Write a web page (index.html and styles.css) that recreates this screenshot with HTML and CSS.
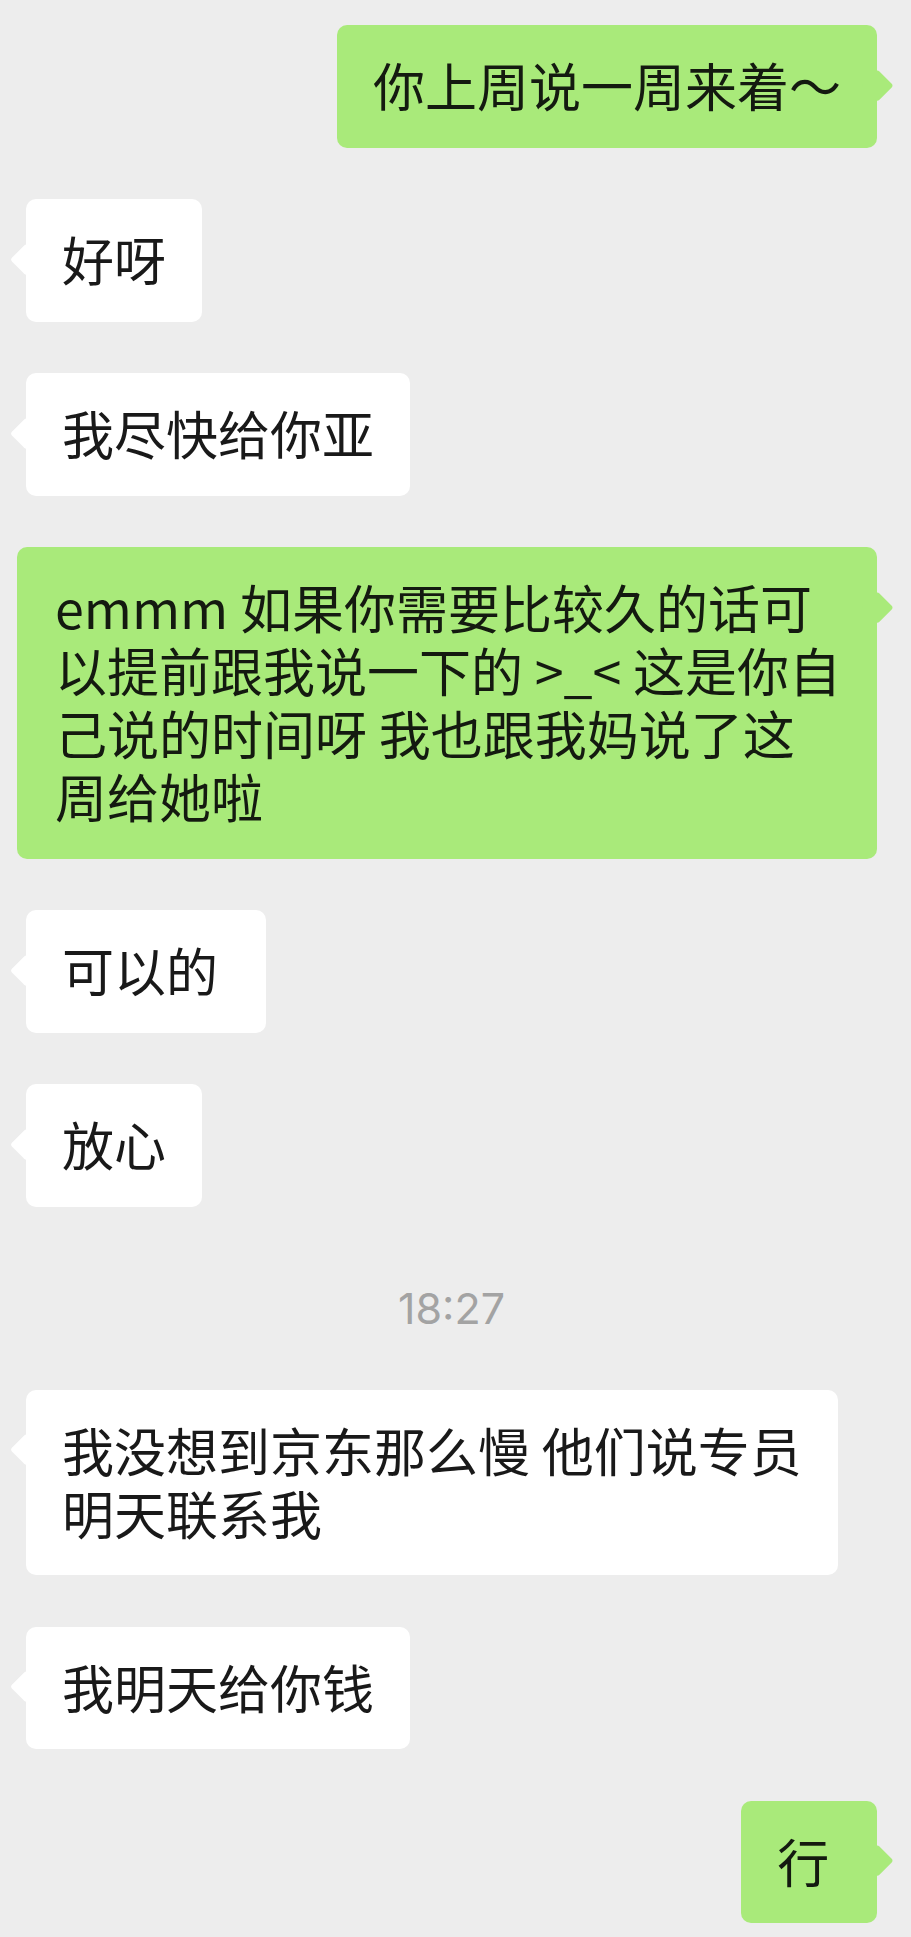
FILE: index.html
```html
<!DOCTYPE html>
<html lang="zh-CN">
<head>
<meta charset="utf-8">
<title>Chat</title>
<link rel="stylesheet" href="styles.css">
</head>
<body>
<main class="chat">
  <div class="row out"><div class="bubble green">你上周说一周来着～</div></div>
  <div class="row in"><div class="bubble white">好呀</div></div>
  <div class="row in"><div class="bubble white">我尽快给你亚</div></div>
  <div class="row out"><div class="bubble green wide-out">emmm 如果你需要比较久的话可<br>以提前跟我说一下的 &gt;_&lt; 这是你自<br>己说的时间呀 我也跟我妈说了这<br>周给她啦</div></div>
  <div class="row in"><div class="bubble white">可以的&nbsp;</div></div>
  <div class="row in"><div class="bubble white">放心</div></div>
  <div class="time">18:27</div>
  <div class="row in"><div class="bubble white wide-in">我没想到京东那么慢 他们说专员<br>明天联系我</div></div>
  <div class="row in"><div class="bubble white">我明天给你钱</div></div>
  <div class="row out"><div class="bubble green">行&nbsp;</div></div>
</main>
</body>
</html>
```
FILE: styles.css
```css
html, body {
  margin: 0;
  padding: 0;
  background: #ededed;
}

.chat {
  display: flex;
  flex-direction: column;
  gap: 51.5px;
  padding: 25px 34px 20px 26px;
  font-family: "Noto Sans CJK SC", "Noto Sans", sans-serif;
}

.row {
  display: flex;
}

.row.out {
  justify-content: flex-end;
}

.row.in {
  justify-content: flex-start;
}

.bubble {
  position: relative;
  box-sizing: border-box;
  padding: 28px 36px 31.6px 36px;
  font-size: 52px;
  line-height: 63px;
  border-radius: 10px;
  color: #191919;
  white-space: nowrap;
}

.bubble::before {
  content: "";
  position: absolute;
  top: 48.7px;
  width: 22.6px;
  height: 22.6px;
  border-radius: 3px;
  transform: rotate(45deg);
}

.green {
  background: #a9ea7a;
  color: #141a10;
}

.green::before {
  background: #a9ea7a;
  right: -11.3px;
}

.white {
  background: #ffffff;
}

.white::before {
  background: #ffffff;
  left: -11.3px;
}

.wide-out {
  width: 860px;
  padding-left: 38px;
}

.wide-in {
  width: 812px;
}

.time {
  align-self: center;
  margin: 25px 0 6.5px 0;
  font-family: "Inter", "Liberation Sans", sans-serif;
  font-size: 43px;
  line-height: 48px;
  color: #a3a3a3;
}
```
